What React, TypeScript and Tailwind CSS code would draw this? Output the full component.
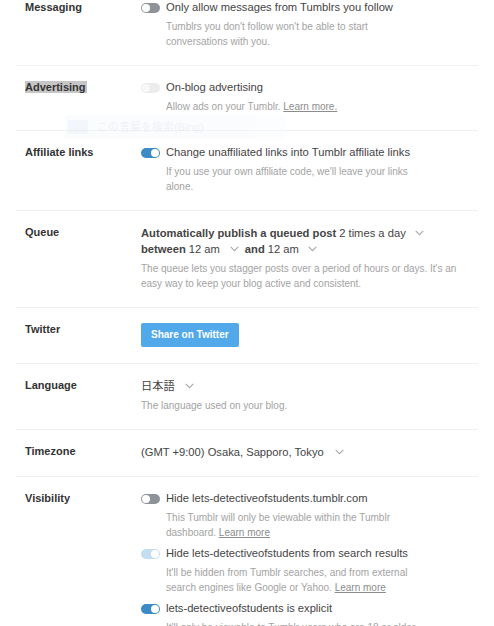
import React from "react";

type ToggleState = "off" | "disabled" | "on" | "onDisabled";

const Toggle: React.FC<{ state: ToggleState }> = ({ state }) => {
  const track =
    state === "off"
      ? "bg-[#8e939a]"
      : state === "disabled"
        ? "bg-[#ececec]"
        : state === "on"
          ? "bg-[#3b8bc6]"
          : "bg-[#c4ddef]";
  const knob =
    state === "off" || state === "disabled" ? "left-[1px]" : "right-[1px]";
  const knobColor = state === "disabled" ? "bg-[#f8f8f8]" : "bg-white";
  return (
    <span
      className={`relative mt-[3px] inline-block h-[10px] w-[19px] shrink-0 rounded-full ${track}`}
    >
      <span
        className={`absolute top-[1px] h-[8px] w-[8px] rounded-full ${knob} ${knobColor}`}
      />
    </span>
  );
};

const Chevron: React.FC<{ className?: string }> = ({ className }) => (
  <svg
    width="9"
    height="6"
    viewBox="0 0 9 6"
    className={`inline-block ${className ?? ""}`}
  >
    <polyline
      points="0.7,0.8 4.5,4.6 8.3,0.8"
      fill="none"
      stroke="#a9a9a9"
      strokeWidth="1.1"
    />
  </svg>
);

const Desc: React.FC<{ children: React.ReactNode; className?: string }> = ({
  children,
  className,
}) => (
  <p className={`text-[10px] leading-[15px] text-[#a3a3a3] ${className ?? ""}`}>
    {children}
  </p>
);

const LearnMore: React.FC<{ text?: string }> = ({ text = "Learn more" }) => (
  <span className="text-[#8c8c8c] underline">{text}</span>
);

const ToggleItem: React.FC<{
  state: ToggleState;
  title: string;
  children: React.ReactNode;
}> = ({ state, title, children }) => (
  <div className="flex items-start">
    <Toggle state={state} />
    <div className="ml-[6px] max-w-[250px]">
      <div className="text-[11.2px] leading-[15px] text-[#444]">{title}</div>
      <Desc className="mt-[4px]">{children}</Desc>
    </div>
  </div>
);

const Row: React.FC<{
  label: React.ReactNode;
  children: React.ReactNode;
  last?: boolean;
}> = ({ label, children, last }) => (
  <div
    className={`flex pb-[16px] pt-[14px] ${last ? "" : "border-b border-[#f0f0f0]"}`}
  >
    <div className="w-[125px] shrink-0 pl-[9px] text-[11px] font-bold leading-[15px] text-[#333]">
      {label}
    </div>
    <div className="min-w-0 flex-1 pr-[8px]">{children}</div>
  </div>
);

export default function App() {
  return (
    <div className="relative h-[626px] overflow-hidden bg-white font-['Liberation_Sans',Arial,'Noto_Sans_CJK_JP',sans-serif]">
      <div className="-mt-[14px] ml-[16px] w-[462px]">
        <Row label="Messaging">
          <ToggleItem state="off" title="Only allow messages from Tumblrs you follow">
            Tumblrs you don't follow won't be able to start conversations with
            you.
          </ToggleItem>
        </Row>

        <Row
          label={<span className="bg-[#c6c6c6] pr-[1px]">Advertising</span>}
        >
          <ToggleItem state="disabled" title="On-blog advertising">
            Allow ads on your Tumblr. <LearnMore text="Learn more." />
          </ToggleItem>
        </Row>

        <Row label="Affiliate links">
          <ToggleItem
            state="on"
            title="Change unaffiliated links into Tumblr affiliate links"
          >
            If you use your own affiliate code, we'll leave your links alone.
          </ToggleItem>
        </Row>

        <Row label="Queue">
          <div className="text-[11.2px] leading-[16px] text-[#444]">
            <div className="flex h-[16px] items-center">
              <span className="font-bold">
                Automatically publish a queued post
              </span>
              <span className="ml-[3px]">2 times a day</span>
              <Chevron className="ml-[9px]" />
            </div>
            <div className="flex h-[16px] items-center">
              <span className="font-bold">between</span>
              <span className="ml-[3px]">12 am</span>
              <Chevron className="ml-[10px]" />
              <span className="ml-[6px] font-bold">and</span>
              <span className="ml-[3px]">12 am</span>
              <Chevron className="ml-[9px]" />
            </div>
          </div>
          <Desc className="mt-[4px] max-w-[325px]">
            The queue lets you stagger posts over a period of hours or days.
            It's an easy way to keep your blog active and consistent.
          </Desc>
        </Row>

        <Row label="Twitter">
          <button className="mt-[1px] block h-[24px] rounded-[2px] bg-[#52a9e9] px-[10px] text-[10px] font-bold leading-[24px] text-white">
            Share on Twitter
          </button>
        </Row>

        <Row label="Language">
          <div className="flex h-[16px] items-center text-[11.2px] leading-[16px] text-[#444]">
            <span>日本語</span>
            <Chevron className="ml-[10px]" />
          </div>
          <Desc className="mt-[4px]">The language used on your blog.</Desc>
        </Row>

        <Row label="Timezone">
          <div className="flex h-[16px] items-center text-[11.2px] leading-[16px] text-[#444]">
            <span>(GMT +9:00) Osaka, Sapporo, Tokyo</span>
            <Chevron className="ml-[11px]" />
          </div>
        </Row>

        <Row label="Visibility" last>
          <div className="flex flex-col gap-[6px]">
            <ToggleItem
              state="off"
              title="Hide lets-detectiveofstudents.tumblr.com"
            >
              This Tumblr will only be viewable within the Tumblr dashboard.{" "}
              <LearnMore />
            </ToggleItem>
            <ToggleItem
              state="onDisabled"
              title="Hide lets-detectiveofstudents from search results"
            >
              It'll be hidden from Tumblr searches, and from external search
              engines like Google or Yahoo. <LearnMore />
            </ToggleItem>
            <ToggleItem
              state="on"
              title="lets-detectiveofstudents is explicit"
            >
              It'll only be viewable to Tumblr users who are 18 or older and
              have opted in.
            </ToggleItem>
          </div>
        </Row>
      </div>

      {/* faint drag ghost left over the Advertising row */}
      <div className="pointer-events-none absolute left-[65px] top-[115px] flex h-[24px] w-[220px] items-center gap-[9px] bg-[#f6f9fd] px-[3px] opacity-40">
        <span className="h-[14px] w-[20px] bg-[#e2eaf5]" />
        <span className="text-[11px] text-[#d8e0ec]">
          この言葉を検索(Bing)
        </span>
      </div>
    </div>
  );
}
